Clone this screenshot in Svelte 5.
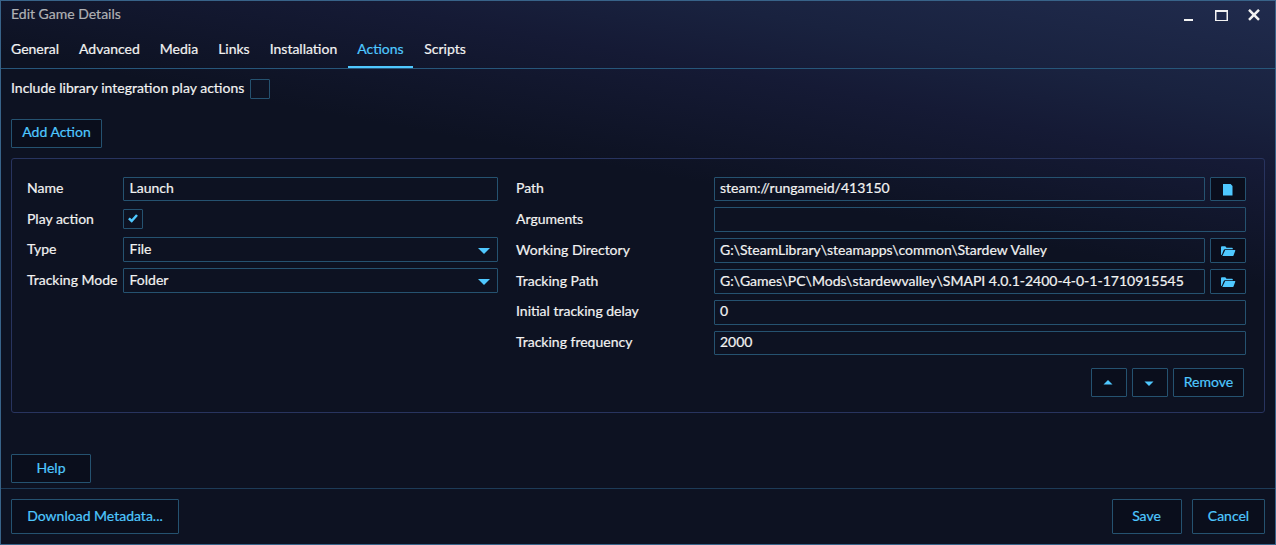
<script>
  const tabs = ['General', 'Advanced', 'Media', 'Links', 'Installation', 'Actions', 'Scripts'];
  const active = 'Actions';

  const fields = [
    { label: 'Path', value: 'steam://rungameid/413150', icon: 'file', h: 24 },
    { label: 'Arguments', value: '', h: 25, drop: true },
    { label: 'Working Directory', value: 'G:\\SteamLibrary\\steamapps\\common\\Stardew Valley', icon: 'folder', h: 25, drop: true },
    { label: 'Tracking Path', value: 'G:\\Games\\PC\\Mods\\stardewvalley\\SMAPI 4.0.1-2400-4-0-1-1710915545', icon: 'folder', h: 25, drop: true },
    { label: 'Initial tracking delay', value: '0', h: 25 },
    { label: 'Tracking frequency', value: '2000', h: 24 }
  ];
</script>

<div class="window">
  <header>
    <span class="title">Edit Game Details</span>
    <div class="controls">
      <svg width="9" height="12" viewBox="0 0 9 12"><path d="M0 12h9" stroke="#f2f2f2" stroke-width="4" /></svg>
      <svg width="13" height="12" viewBox="0 0 13 12"><path d="M0 0h13v11H0zM1.500 2v8h10V2z" fill="#f2f2f2" fill-rule="evenodd" /></svg>
      <svg width="12" height="12" viewBox="0 0 12 12"><path d="M1 0.800l10 10M11 0.800L1 10.800" stroke="#f2f2f2" stroke-width="2.500" /></svg>
    </div>
  </header>

  <nav>
    {#each tabs as tab}
      <div class="tab" class:active={tab === active}>{tab}</div>
    {/each}
  </nav>

  <main>
    <div class="include">
      <span>Include library integration play actions</span>
      <div class="check"></div>
    </div>
    <button class="add">Add Action</button>

    <section class="panel">
      <div class="columns">
        <div class="left">
          <div class="row name"><span>Name</span><div class="box">Launch</div></div>
          <div class="row play">
            <span>Play action</span>
            <div class="check">
              <svg width="10" height="9" viewBox="0 0 10 9"><path d="M0.900 4.300L3.700 7L9 1" fill="none" stroke="#4fc8ff" stroke-width="2.500" /></svg>
            </div>
          </div>
          <div class="row combo">
            <span>Type</span>
            <div class="box">File<svg width="12" height="6" viewBox="0 0 12 6"><path d="M0 0h12L6 6z" fill="#4fc8ff" /></svg></div>
          </div>
          <div class="row combo">
            <span>Tracking Mode</span>
            <div class="box">Folder<svg width="12" height="6" viewBox="0 0 12 6"><path d="M0 0h12L6 6z" fill="#4fc8ff" /></svg></div>
          </div>
        </div>

        <div class="right">
          {#each fields as f}
            <div class="row" class:drop={f.drop} style:height="{f.h}px">
              <span>{f.label}</span>
              <div class="box">{f.value}</div>
              {#if f.icon}
                <button class="pick">
                  {#if f.icon === 'file'}
                    <svg class="file" width="10" height="12" viewBox="0 0 10 12"><path d="M0 0h7.600L9.500 1.900V11.500H0z" fill="#4fc8ff" /></svg>
                  {:else}
                    <svg class="folder" width="15" height="11" viewBox="0 0 15 11"><path d="M0 8.800V1.200Q0 0.300 0.900 0.300h3.400l1.200 1.500h5.500q0.800 0 0.800 0.800v0.700H4Q3.100 3.300 2.700 4.100L0.700 9z" fill="#4fc8ff" /><path d="M4.200 4.100h9.700q0.600 0 0.400 0.600l-1.800 4.700q-0.300 0.700-1 0.700H1.300z" fill="#4fc8ff" /></svg>
                  {/if}
                </button>
              {/if}
            </div>
          {/each}
        </div>
      </div>

      <div class="order">
        <button class="move"><svg width="10" height="5" viewBox="0 0 10 5"><path d="M0.500 4.500L5 0l4.500 4.500z" fill="#4fc8ff" /></svg></button>
        <button class="move down"><svg width="10" height="5" viewBox="0 0 10 5"><path d="M0.500 0.500h9L5 5z" fill="#4fc8ff" /></svg></button>
        <button class="remove">Remove</button>
      </div>
    </section>

    <button class="help">Help</button>
  </main>

  <footer>
    <button class="download">Download Metadata...</button>
    <div class="confirm">
      <button class="save">Save</button>
      <button class="cancel">Cancel</button>
    </div>
  </footer>
</div>

<style>
  :global(body) {
    background: #0d1222;
  }
  .window,
  .window * {
    box-sizing: border-box;
  }
  .window {
    width: 1276px;
    height: 545px;
    display: flex;
    flex-direction: column;
    border: 1px solid #386389;
    background: linear-gradient(190.5deg, #202b4d 0%, #19223f 14%, #151a35 22%, #0d1222 37%, #0d1222 100%);
    color: #f2f2f2;
    font: 14px/20px Lato, 'Liberation Sans', sans-serif;
    -webkit-text-stroke: 0.2px currentColor;
    overflow: hidden;
    white-space: nowrap;
  }
  header {
    height: 30px;
    padding: 3px 15px 0 10px;
    display: flex;
    justify-content: space-between;
  }
  .title {
    color: #b0b1b4;
  }
  .controls {
    display: flex;
    gap: 22px;
    padding-top: 5px;
  }
  .controls svg:nth-child(2) {
    margin-top: 1px;
  }
  .controls svg:last-child {
    margin-left: -2px;
  }
  nav {
    height: 38px;
    display: flex;
    border-bottom: 1px solid #27567a;
  }
  .tab {
    height: 37px;
    padding: 8px 10px 0;
  }
  .tab.active {
    width: 65px;
    margin: 0 1px;
    padding: 8px 9px 0;
    color: #4fc8ff;
    border-bottom: 2px solid #4fc8ff;
  }
  main {
    height: 419px;
    padding: 10px 10px 0;
    display: flex;
    flex-direction: column;
    align-items: flex-start;
  }
  .include {
    display: flex;
    gap: 5px;
    height: 20px;
  }
  .include span {
    line-height: 18px;
    width: 234px;
  }
  .check {
    width: 20px;
    height: 20px;
    flex: none;
    border: 1px solid #255270;
    border-radius: 1px;
    display: flex;
    align-items: center;
    justify-content: center;
  }
  .check svg {
    margin-top: -1px;
  }
  button {
    flex: none;
    display: flex;
    align-items: center;
    justify-content: center;
    padding: 0;
    border: 1px solid #255270;
    border-radius: 1px;
    background: #0a0e1c;
    color: #4fc8ff;
    font: inherit;
  }
  .add {
    width: 91px;
    height: 29px;
    margin-top: 20px;
    padding-bottom: 3px;
  }
  .panel {
    width: 1254px;
    height: 255px;
    margin-top: 10px;
    padding: 18px 18px 0 15px;
    border: 1px solid #28345f;
    border-radius: 3px;
  }
  .columns {
    display: flex;
    gap: 18px;
  }
  .left {
    width: 471px;
  }
  .right {
    width: 730px;
    display: flex;
    flex-direction: column;
    gap: 6px;
  }
  .row {
    display: flex;
    line-height: 22px;
  }
  .left .row span {
    width: 96px;
  }
  .right .row span {
    width: 198px;
  }
  .box {
    flex: 1;
    display: flex;
    justify-content: space-between;
    line-height: 20px;
    border: 1px solid #255270;
    border-radius: 1px;
    padding: 0 6px 0 5px;
  }
  .left .box {
    padding: 0 7px 0 5.5px;
  }
  .name {
    height: 24px;
  }
  .play {
    height: 20px;
    margin: 8px 0;
    line-height: 20px;
  }
  .combo {
    height: 25px;
    margin-bottom: 6px;
  }
  .combo,
  .drop {
    line-height: 24px;
  }
  .combo .box,
  .drop .box {
    line-height: 22px;
  }
  .box svg {
    margin-top: 10px;
  }
  .pick {
    width: 36px;
    margin-left: 5px;
  }
  .pick .file {
    margin-top: 1px;
  }
  .pick .folder {
    margin-top: 2px;
  }
  .order {
    display: flex;
    justify-content: flex-end;
    gap: 5px;
    padding: 13px 2px 0 0;
  }
  .order button {
    height: 29px;
  }
  .order .move {
    width: 36px;
    padding-right: 2px;
  }
  .order .down {
    padding-top: 2px;
  }
  .order .remove {
    width: 71px;
    padding-bottom: 1px;
  }
  .help {
    width: 80px;
    height: 29px;
    margin-top: 41px;
    padding-bottom: 1px;
  }
  footer {
    height: 56px;
    border-top: 1px solid #1d3b58;
    padding: 10px 10px 0;
    display: flex;
    justify-content: space-between;
  }
  footer button {
    height: 35px;
    padding-bottom: 1px;
  }
  .download {
    width: 168px;
  }
  .confirm {
    display: flex;
    gap: 10px;
  }
  .save {
    width: 70px;
    padding-right: 1px;
  }
  .cancel {
    width: 73px;
  }
</style>
